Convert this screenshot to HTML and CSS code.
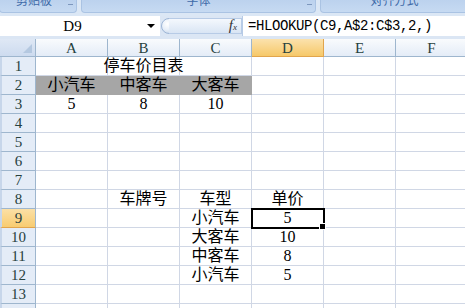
FILE: index.html
```html
<!DOCTYPE html>
<html lang="zh-CN">
<head>
    <meta charset="UTF-8">
    <title>停车价目表</title>
    <link rel="stylesheet" href="styles.css">
</head>
<body>
    <div class="ribbon">
        <div class="grp g1"><span>剪贴板</span><i class="launch"></i></div>
        <div class="grp g2"><span>字体</span><i class="launch"></i></div>
        <div class="grp g3"><span>对齐方式</span></div>
    </div>

    <div class="fbar">
        <div class="namebox"><span class="name">D9</span><span class="arrow"></span></div>
        <div class="fxbtn"><span class="knob"></span><span class="fx">f<sub>x</sub></span></div>
        <div class="formula">=HLOOKUP(C9,A$2:C$3,2,)</div>
    </div>

    <div class="sheet">
        <div class="row head">
            <div class="corner"></div>
            <div class="ch">A</div><div class="ch">B</div><div class="ch">C</div>
            <div class="ch active">D</div><div class="ch">E</div><div class="ch">F</div>
        </div>
        <div class="row">
            <div class="rh">1</div>
            <div class="c"></div><div class="c"><span class="over">停车价目表</span></div><div class="c"></div>
            <div class="c"></div><div class="c"></div><div class="c"></div>
        </div>
        <div class="row">
            <div class="rh">2</div>
            <div class="c fill">小汽车</div><div class="c fill">中客车</div><div class="c fill">大客车</div>
            <div class="c"></div><div class="c"></div><div class="c"></div>
        </div>
        <div class="row">
            <div class="rh">3</div>
            <div class="c">5</div><div class="c">8</div><div class="c">10</div>
            <div class="c"></div><div class="c"></div><div class="c"></div>
        </div>
        <div class="row">
            <div class="rh">4</div>
            <div class="c"></div><div class="c"></div><div class="c"></div>
            <div class="c"></div><div class="c"></div><div class="c"></div>
        </div>
        <div class="row">
            <div class="rh">5</div>
            <div class="c"></div><div class="c"></div><div class="c"></div>
            <div class="c"></div><div class="c"></div><div class="c"></div>
        </div>
        <div class="row">
            <div class="rh">6</div>
            <div class="c"></div><div class="c"></div><div class="c"></div>
            <div class="c"></div><div class="c"></div><div class="c"></div>
        </div>
        <div class="row">
            <div class="rh">7</div>
            <div class="c"></div><div class="c"></div><div class="c"></div>
            <div class="c"></div><div class="c"></div><div class="c"></div>
        </div>
        <div class="row">
            <div class="rh">8</div>
            <div class="c"></div><div class="c">车牌号</div><div class="c">车型</div>
            <div class="c">单价</div><div class="c"></div><div class="c"></div>
        </div>
        <div class="row">
            <div class="rh active">9</div>
            <div class="c"></div><div class="c"></div><div class="c">小汽车</div>
            <div class="c sel">5</div><div class="c"></div><div class="c"></div>
        </div>
        <div class="row">
            <div class="rh">10</div>
            <div class="c"></div><div class="c"></div><div class="c">大客车</div>
            <div class="c">10</div><div class="c"></div><div class="c"></div>
        </div>
        <div class="row">
            <div class="rh">11</div>
            <div class="c"></div><div class="c"></div><div class="c">中客车</div>
            <div class="c">8</div><div class="c"></div><div class="c"></div>
        </div>
        <div class="row">
            <div class="rh">12</div>
            <div class="c"></div><div class="c"></div><div class="c">小汽车</div>
            <div class="c">5</div><div class="c"></div><div class="c"></div>
        </div>
        <div class="row">
            <div class="rh">13</div>
            <div class="c"></div><div class="c"></div><div class="c"></div>
            <div class="c"></div><div class="c"></div><div class="c"></div>
        </div>
        <div class="row">
            <div class="rh">14</div>
            <div class="c"></div><div class="c"></div><div class="c"></div>
            <div class="c"></div><div class="c"></div><div class="c"></div>
        </div>
    </div>
</body>
</html>
```

FILE: styles.css
```css
body {
    margin: 0;
    width: 465px;
    height: 308px;
    overflow: hidden;
    background: #dbe6f4;
    font-family: "Liberation Serif", "Noto Sans CJK SC", serif;
}

/* ribbon group labels, cut off at the top */
.ribbon {
    height: 16px;
    display: flex;
    gap: 4px;
    background: #dbe7f5;
}
.grp {
    position: relative;
    height: 13px;
    background: linear-gradient(#bcd2ee, #c6daf2);
    border: 1px solid #aac3e3;
    border-top: none;
    border-radius: 0 0 4px 4px;
    box-sizing: border-box;
    overflow: hidden;
    text-align: center;
    font-family: "Noto Sans CJK SC", sans-serif;
    font-size: 12px;
    color: #3e6aa8;
}
.grp span {
    display: block;
    line-height: 12px;
    margin-top: -6px;
}
.g1 { width: 78px; margin-left: -1px; }
.g1 span { padding-right: 8px; }
.g2 { width: 235px; }
.g3 { flex: 1; margin-right: -4px; }
.launch {
    position: absolute;
    right: 3px;
    top: 1px;
    width: 5px;
    height: 3px;
    border-bottom: 1px solid #7d97bd;
}

/* formula bar */
.fbar {
    height: 20px;
    margin-bottom: 3px;
    display: flex;
}
.namebox {
    width: 160px;
    background: #fff;
    display: flex;
    align-items: center;
    font-size: 15px;
}
.name {
    width: 145px;
    text-align: center;
}
.arrow {
    width: 0;
    height: 0;
    border-left: 4px solid transparent;
    border-right: 4px solid transparent;
    border-top: 4px solid #000;
    margin-left: 2px;
}
.fxbtn {
    width: 82px;
    display: flex;
    align-items: center;
    justify-content: space-between;
    padding: 2px 0;
    box-sizing: border-box;
}
.knob {
    width: 16px;
    height: 16px;
    border-radius: 50%;
    border: 1px solid #9db5d6;
    background: radial-gradient(circle at 40% 35%, #ffffff 0, #e6eef8 50%, #b8cbe4 100%);
    box-sizing: border-box;
    margin-left: 1px;
}
.fx {
    height: 16px;
    flex: 1;
    margin-left: -8px;
    background: linear-gradient(#f4f8fd, #d9e5f4);
    border: 1px solid #b7cbe6;
    border-left: none;
    box-sizing: border-box;
    text-align: right;
    padding-right: 4px;
    font-style: italic;
    font-size: 15px;
    line-height: 13px;
    color: #333;
}
.fx sub {
    font-size: 9px;
    vertical-align: 0;
}
.formula {
    flex: 1;
    background: #fff;
    border-left: 1px solid #b7cbe6;
    padding-left: 5px;
    font-family: "Liberation Mono", monospace;
    font-size: 14px;
    letter-spacing: -0.4px;
    line-height: 20px;
}

/* grid */
.sheet {
    background: #fff;
}
.row {
    display: flex;
    height: 19px;
}
.row.head {
    height: 18px;
}
.corner, .rh {
    width: 36px;
    flex: none;
    box-sizing: border-box;
}
.corner {
    position: relative;
    background: linear-gradient(#dfe8f5, #cddbef);
    border-right: 1px solid #9eb6ce;
    border-bottom: 1px solid #9eb6ce;
}
.corner::after {
    content: "";
    position: absolute;
    right: 3px;
    bottom: 3px;
    border-left: 9px solid transparent;
    border-bottom: 9px solid #b4c8e0;
}
.ch {
    width: 72px;
    flex: none;
    box-sizing: border-box;
    background: linear-gradient(#f9fbfd, #e4ecf7);
    border-right: 1px solid #9eb6ce;
    border-bottom: 1px solid #9eb6ce;
    text-align: center;
    font-size: 15px;
    line-height: 18px;
    color: #27413e;
}
.ch.active {
    background: linear-gradient(#fbe2ad, #f6c869);
    border-right-color: #e1a54d;
    border-bottom-color: #e1a54d;
}
.rh {
    background: #e4ecf7;
    border-right: 1px solid #9eb6ce;
    border-bottom: 1px solid #9eb6ce;
    border-left: 2px solid #c7d6ea;
    text-align: center;
    font-size: 15px;
    line-height: 19px;
    color: #27413e;
}
.rh.active {
    background: linear-gradient(#fbe0a6, #f8cc71);
    border-bottom-color: #e1a54d;
}
.c {
    width: 72px;
    flex: none;
    box-sizing: border-box;
    border-right: 1px solid #d0d7e5;
    border-bottom: 1px solid #d0d7e5;
    display: flex;
    justify-content: center;
    align-items: flex-end;
    font-size: 16px;
    line-height: 18px;
    white-space: nowrap;
    color: #000;
}
.c.fill {
    background: #a6a6a6;
    border-color: #a6a6a6;
}
.over {
    position: relative;
    z-index: 1;
}
.c.sel {
    position: relative;
}
.c.sel::before {
    content: "";
    position: absolute;
    left: -1px;
    top: -1px;
    width: 74px;
    height: 21px;
    border: 2px solid #000;
    box-sizing: border-box;
}
.c.sel::after {
    content: "";
    position: absolute;
    right: -3px;
    bottom: -3px;
    width: 5px;
    height: 5px;
    background: #000;
    border: 1px solid #fff;
    z-index: 2;
}
```
